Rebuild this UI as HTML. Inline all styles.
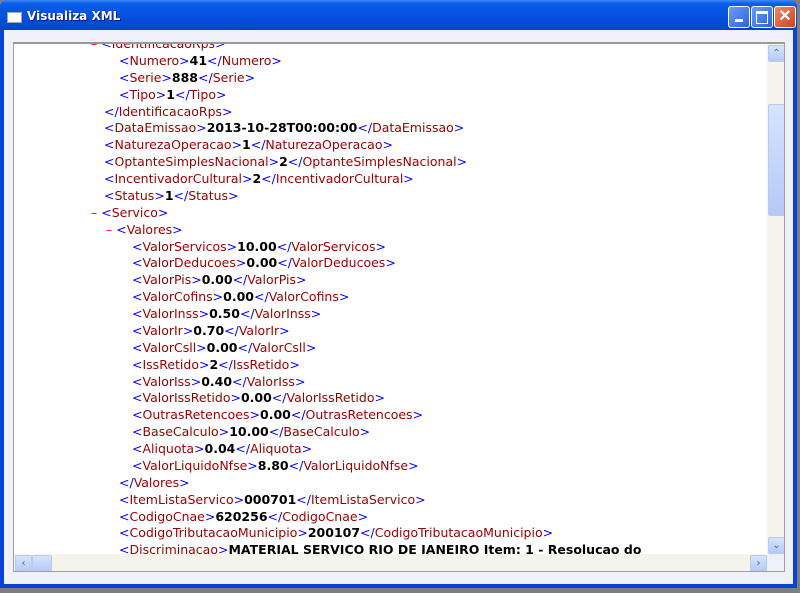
<!DOCTYPE html>
<html><head><style>
body{margin:0;width:800px;height:593px;background:#7f7f7f;overflow:hidden;font-family:"DejaVu Sans",sans-serif}
#win{position:absolute;left:0;top:0;width:797px;height:588px;background:#0842d6;border-radius:7px 7px 0 0}
#title{position:absolute;left:0;top:0;width:797px;height:30px;border-radius:7px 7px 0 0;background:linear-gradient(#3d8cf5 0,#0a5ee8 12%,#0551e0 50%,#0447d0 90%,#0343c4 100%)}
#title span{position:absolute;left:27px;top:9px;color:#fff;font:bold 12px "DejaVu Sans",sans-serif;text-shadow:1px 1px #0a1a7a}
#ico{position:absolute;left:7px;top:12px;width:13px;height:9px;background:#fff;border:1px solid #9ab}
.btn{position:absolute;top:6px;width:20px;height:20px;border:1px solid #fff;border-radius:3px;background:linear-gradient(135deg,#6d9cf7,#2a62e0)}
#body{position:absolute;left:4px;top:30px;width:789px;height:554px;background:#f0f1f8}
#box{position:absolute;left:13px;top:42px;width:770px;height:527px;background:#fff;border:1px solid #a0a0a0;border-top:2px solid #9a9a9a;overflow:hidden}
#content{position:absolute;left:0;top:-8px;font-size:12.5px;line-height:16.87px;white-space:pre}
.b{color:#00f}.t{color:#990000}.m{color:#f00}.v{color:#000;font-weight:bold}
#vs{position:absolute;left:753px;top:0;width:17px;height:510px;background:#f5f4ea}
#hs{position:absolute;left:0;top:510px;width:753px;height:17px;background:#f5f4ea}
.sb{position:absolute;width:15px;height:15px;background:linear-gradient(#d6e4ff,#b4c9f5);border:1px solid #b9c9ef;border-radius:2px;color:#4d6185;font-size:10px;line-height:15px;text-align:center}
</style></head><body>
<div id="win">
<div id="title"><div id="ico"></div><span>Visualiza XML</span>
<div class="btn" style="left:728px"><div style="position:absolute;left:6px;top:12px;width:8px;height:3px;background:#fff"></div></div>
<div class="btn" style="left:751px"><div style="position:absolute;left:4px;top:4px;width:10px;height:9px;border:1px solid #fff;border-top:3px solid #fff"></div></div>
<div class="btn" style="left:774px;background:linear-gradient(135deg,#f08a6a,#d2401c);color:#fff;font:bold 16px sans-serif;text-align:center;line-height:20px">✕</div>
</div>
<div id="body"></div>
<div id="box">
<div id="content"><span style="padding-left:77px"></span><span class="m">–</span> <span class="b">&lt;</span><span class="t">IdentificacaoRps</span><span class="b">&gt;</span>
<span style="padding-left:105px"></span><span class="b">&lt;</span><span class="t">Numero</span><span class="b">&gt;</span><span class="v">41</span><span class="b">&lt;/</span><span class="t">Numero</span><span class="b">&gt;</span>
<span style="padding-left:105px"></span><span class="b">&lt;</span><span class="t">Serie</span><span class="b">&gt;</span><span class="v">888</span><span class="b">&lt;/</span><span class="t">Serie</span><span class="b">&gt;</span>
<span style="padding-left:105px"></span><span class="b">&lt;</span><span class="t">Tipo</span><span class="b">&gt;</span><span class="v">1</span><span class="b">&lt;/</span><span class="t">Tipo</span><span class="b">&gt;</span>
<span style="padding-left:90px"></span><span class="b">&lt;/</span><span class="t">IdentificacaoRps</span><span class="b">&gt;</span>
<span style="padding-left:90px"></span><span class="b">&lt;</span><span class="t">DataEmissao</span><span class="b">&gt;</span><span class="v">2013-10-28T00:00:00</span><span class="b">&lt;/</span><span class="t">DataEmissao</span><span class="b">&gt;</span>
<span style="padding-left:90px"></span><span class="b">&lt;</span><span class="t">NaturezaOperacao</span><span class="b">&gt;</span><span class="v">1</span><span class="b">&lt;/</span><span class="t">NaturezaOperacao</span><span class="b">&gt;</span>
<span style="padding-left:90px"></span><span class="b">&lt;</span><span class="t">OptanteSimplesNacional</span><span class="b">&gt;</span><span class="v">2</span><span class="b">&lt;/</span><span class="t">OptanteSimplesNacional</span><span class="b">&gt;</span>
<span style="padding-left:90px"></span><span class="b">&lt;</span><span class="t">IncentivadorCultural</span><span class="b">&gt;</span><span class="v">2</span><span class="b">&lt;/</span><span class="t">IncentivadorCultural</span><span class="b">&gt;</span>
<span style="padding-left:90px"></span><span class="b">&lt;</span><span class="t">Status</span><span class="b">&gt;</span><span class="v">1</span><span class="b">&lt;/</span><span class="t">Status</span><span class="b">&gt;</span>
<span style="padding-left:77px"></span><span class="m">–</span> <span class="b">&lt;</span><span class="t">Servico</span><span class="b">&gt;</span>
<span style="padding-left:92px"></span><span class="m">–</span> <span class="b">&lt;</span><span class="t">Valores</span><span class="b">&gt;</span>
<span style="padding-left:118px"></span><span class="b">&lt;</span><span class="t">ValorServicos</span><span class="b">&gt;</span><span class="v">10.00</span><span class="b">&lt;/</span><span class="t">ValorServicos</span><span class="b">&gt;</span>
<span style="padding-left:118px"></span><span class="b">&lt;</span><span class="t">ValorDeducoes</span><span class="b">&gt;</span><span class="v">0.00</span><span class="b">&lt;/</span><span class="t">ValorDeducoes</span><span class="b">&gt;</span>
<span style="padding-left:118px"></span><span class="b">&lt;</span><span class="t">ValorPis</span><span class="b">&gt;</span><span class="v">0.00</span><span class="b">&lt;/</span><span class="t">ValorPis</span><span class="b">&gt;</span>
<span style="padding-left:118px"></span><span class="b">&lt;</span><span class="t">ValorCofins</span><span class="b">&gt;</span><span class="v">0.00</span><span class="b">&lt;/</span><span class="t">ValorCofins</span><span class="b">&gt;</span>
<span style="padding-left:118px"></span><span class="b">&lt;</span><span class="t">ValorInss</span><span class="b">&gt;</span><span class="v">0.50</span><span class="b">&lt;/</span><span class="t">ValorInss</span><span class="b">&gt;</span>
<span style="padding-left:118px"></span><span class="b">&lt;</span><span class="t">ValorIr</span><span class="b">&gt;</span><span class="v">0.70</span><span class="b">&lt;/</span><span class="t">ValorIr</span><span class="b">&gt;</span>
<span style="padding-left:118px"></span><span class="b">&lt;</span><span class="t">ValorCsll</span><span class="b">&gt;</span><span class="v">0.00</span><span class="b">&lt;/</span><span class="t">ValorCsll</span><span class="b">&gt;</span>
<span style="padding-left:118px"></span><span class="b">&lt;</span><span class="t">IssRetido</span><span class="b">&gt;</span><span class="v">2</span><span class="b">&lt;/</span><span class="t">IssRetido</span><span class="b">&gt;</span>
<span style="padding-left:118px"></span><span class="b">&lt;</span><span class="t">ValorIss</span><span class="b">&gt;</span><span class="v">0.40</span><span class="b">&lt;/</span><span class="t">ValorIss</span><span class="b">&gt;</span>
<span style="padding-left:118px"></span><span class="b">&lt;</span><span class="t">ValorIssRetido</span><span class="b">&gt;</span><span class="v">0.00</span><span class="b">&lt;/</span><span class="t">ValorIssRetido</span><span class="b">&gt;</span>
<span style="padding-left:118px"></span><span class="b">&lt;</span><span class="t">OutrasRetencoes</span><span class="b">&gt;</span><span class="v">0.00</span><span class="b">&lt;/</span><span class="t">OutrasRetencoes</span><span class="b">&gt;</span>
<span style="padding-left:118px"></span><span class="b">&lt;</span><span class="t">BaseCalculo</span><span class="b">&gt;</span><span class="v">10.00</span><span class="b">&lt;/</span><span class="t">BaseCalculo</span><span class="b">&gt;</span>
<span style="padding-left:118px"></span><span class="b">&lt;</span><span class="t">Aliquota</span><span class="b">&gt;</span><span class="v">0.04</span><span class="b">&lt;/</span><span class="t">Aliquota</span><span class="b">&gt;</span>
<span style="padding-left:118px"></span><span class="b">&lt;</span><span class="t">ValorLiquidoNfse</span><span class="b">&gt;</span><span class="v">8.80</span><span class="b">&lt;/</span><span class="t">ValorLiquidoNfse</span><span class="b">&gt;</span>
<span style="padding-left:105px"></span><span class="b">&lt;/</span><span class="t">Valores</span><span class="b">&gt;</span>
<span style="padding-left:105px"></span><span class="b">&lt;</span><span class="t">ItemListaServico</span><span class="b">&gt;</span><span class="v">000701</span><span class="b">&lt;/</span><span class="t">ItemListaServico</span><span class="b">&gt;</span>
<span style="padding-left:105px"></span><span class="b">&lt;</span><span class="t">CodigoCnae</span><span class="b">&gt;</span><span class="v">620256</span><span class="b">&lt;/</span><span class="t">CodigoCnae</span><span class="b">&gt;</span>
<span style="padding-left:105px"></span><span class="b">&lt;</span><span class="t">CodigoTributacaoMunicipio</span><span class="b">&gt;</span><span class="v">200107</span><span class="b">&lt;/</span><span class="t">CodigoTributacaoMunicipio</span><span class="b">&gt;</span>
<span style="padding-left:105px"></span><span class="b">&lt;</span><span class="t">Discriminacao</span><span class="b">&gt;</span><span class="v">MATERIAL SERVICO RIO DE JANEIRO Item: 1 - Resolucao do</span>
</div>
<div id="vs"><div class="sb" style="left:1px;top:1px">⌃</div><div class="sb" style="left:1px;top:60px;height:110px"></div><div class="sb" style="left:1px;top:493px">⌄</div></div>
<div id="hs"><div class="sb" style="left:1px;top:1px">‹</div><div class="sb" style="left:18px;top:1px;width:18px"></div><div class="sb" style="left:736px;top:1px">›</div></div>
<div style="position:absolute;left:753px;top:510px;width:17px;height:17px;background:#f0f1f8"></div>
</div>
</div>
</body></html>
